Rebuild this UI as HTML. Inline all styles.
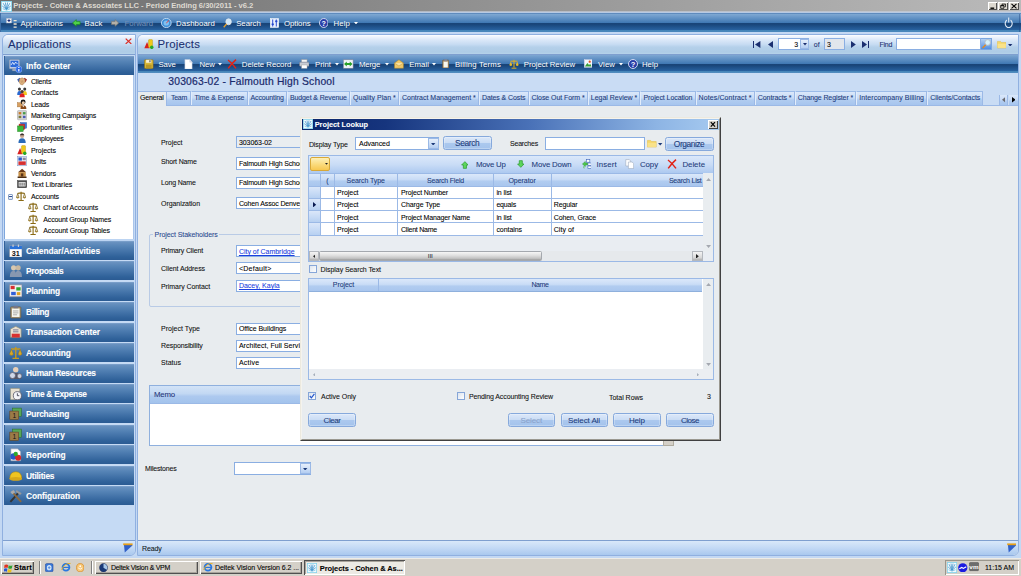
<!DOCTYPE html>
<html><head><meta charset="utf-8"><title>Projects - Cohen &amp; Associates LLC</title><style>
html,body{margin:0;padding:0}
body{width:1021px;height:576px;overflow:hidden;position:relative;background:#bfd5f2;font-family:"Liberation Sans",sans-serif}
#r{position:absolute;left:0;top:0;width:1021px;height:576px;overflow:hidden}
#r div,#r svg,#r span.t{position:absolute}
#r div{overflow:hidden}
span.t{white-space:nowrap;-webkit-text-stroke:0.08px currentColor}
</style></head><body><div id="r">
<div style="left:0.00px;top:0.00px;width:1021.00px;height:576.00px;background:#c3d8f3"></div>
<div style="left:0.00px;top:0.00px;width:1021.00px;height:12.00px;background:linear-gradient(90deg,#6d6d6d 0%,#939393 49%,#bababa 100%)"></div>
<div style="left:0.00px;top:11.00px;width:1021.00px;height:1.00px;background:linear-gradient(90deg,#a8adb6,#c4c9d2)"></div>
<svg style="left:1px;top:1px" width="11" height="11" viewBox="0 0 10 10" preserveAspectRatio="none"><rect x="0" y="0" width="10" height="10" fill="#f2fafd" stroke="#86d2ea" stroke-width="1.6"/><path d="M5 7.6 L2 2 M5 7.6 L4 1.4 M5 7.6 L6 1.4 M5 7.6 L8 2 M5 7.6 L1.2 4.6 M5 7.6 L8.8 4.6" stroke="#3a8ec8" stroke-width="0.7" fill="none"/><path d="M1.6 7 Q5 9.6 8.4 7" stroke="#6ab8e0" stroke-width="0.7" fill="none"/></svg>
<span class="t" style="left:13.30px;top:0px;font-size:7.6px;line-height:11px;color:#dedad2;font-weight:bold;letter-spacing:-0.030px;-webkit-text-stroke:0">Projects - Cohen &amp; Associates LLC - Period Ending 6/30/2011 - v6.2</span>
<div style="left:988.00px;top:2.00px;width:9.00px;height:8.00px;background:#dcd8d0;box-shadow:inset 1px 1px 0 #fff, inset -1px -1px 0 #505050"><svg width="9.0" height="8" viewBox="0 0 9 8" style="position:absolute;left:0;top:0"><path d="M2.4 6.2 H6.2" stroke="#000" stroke-width="1.4"/></svg></div>
<div style="left:998.00px;top:2.00px;width:10.00px;height:8.00px;background:#dcd8d0;box-shadow:inset 1px 1px 0 #fff, inset -1px -1px 0 #505050"><svg width="10.0" height="8" viewBox="0 0 9 8" style="position:absolute;left:0;top:0"><path d="M3.6 2.1 H6.9 M3.6 1.9 V3 M6.9 1.9 V4.8 H6" stroke="#000" stroke-width="0.8" fill="none"/><path d="M2.2 3.5 H5.4 V6.3 H2.2 Z M2.2 3.8 H5.4" stroke="#000" stroke-width="0.8" fill="none"/></svg></div>
<div style="left:1009.00px;top:2.00px;width:10.00px;height:8.00px;background:#dcd8d0;box-shadow:inset 1px 1px 0 #fff, inset -1px -1px 0 #505050"><svg width="10.0" height="8" viewBox="0 0 9 8" style="position:absolute;left:0;top:0"><path d="M2 1.8 L7 6.4 M7 1.8 L2 6.4" stroke="#000" stroke-width="1.1"/></svg></div>
<div style="left:0.00px;top:12.00px;width:1021.00px;height:20.00px;background:linear-gradient(180deg,#b7c9e3 0,#b7c9e3 1px,#5f8bbd 1px,#5f8bbd 2px,#7fa8d2 2px,#78a3d0 3px,#4179b4 10.6px,#1a4579 11.2px,#184478 12px,#27609e 17.6px,#4585b8 18.2px,#4a88bc 20px)"></div>
<div style="left:0.00px;top:13.00px;width:1.00px;height:19.00px;background:#3f6ea8"></div>
<svg style="left:6.00px;top:18.00px" width="11.00" height="10" viewBox="0 0 10 10" preserveAspectRatio="none"><rect x="0.3" y="0.2" width="4.8" height="4.8" fill="#f6f6f6" stroke="#9aa8c4" stroke-width="0.5"/><path d="M1.4 2.6H4M2.7 1.3V3.9" stroke="#1a2a7a" stroke-width="1"/><path d="M6.9 2.6H9.7M6.9 6H9.7M6.9 9.2H9.7" stroke="#f1e8d4" stroke-width="1.3"/></svg>
<span class="t" style="left:20.40px;top:18px;font-size:7.8px;line-height:12px;color:#fff;letter-spacing:0.046px;text-shadow:0.5px 0.5px 0 rgba(20,50,100,0.55);-webkit-text-stroke:0">Applications</span>
<svg style="left:72.00px;top:19.00px" width="8.60" height="8" viewBox="0 0 10 10" preserveAspectRatio="none"><path d="M0.6 5 L5 0.8 V3 H9.4 V7 H5 V9.2 Z" fill="#4fd048" stroke="#1c8a1c" stroke-width="0.8"/></svg>
<span class="t" style="left:84.60px;top:18px;font-size:7.8px;line-height:12px;color:#fff;letter-spacing:0.189px;text-shadow:0.5px 0.5px 0 rgba(20,50,100,0.55);-webkit-text-stroke:0">Back</span>
<svg style="left:111.00px;top:19.00px" width="8.20" height="8" viewBox="0 0 10 10" preserveAspectRatio="none"><path d="M9.4 5 L5 0.8 V3 H0.6 V7 H5 V9.2 Z" fill="#b4b0a8" stroke="#7a7872" stroke-width="0.8"/></svg>
<span class="t" style="left:124.60px;top:18px;font-size:7.8px;line-height:12px;color:#6f8db6;letter-spacing:-0.030px;">Forward</span>
<svg style="left:161.40px;top:17.60px" width="10.60" height="10" viewBox="0 0 10 10" preserveAspectRatio="none"><circle cx="5" cy="5" r="4.6" fill="#3f8fd8" stroke="#cfe3f7" stroke-width="0.8"/><circle cx="5" cy="5" r="2.6" fill="#7fc0f0"/><path d="M5 5 L7.5 2.5" stroke="#e33" stroke-width="0.9"/></svg>
<span class="t" style="left:176.00px;top:18px;font-size:7.8px;line-height:12px;color:#fff;letter-spacing:0.094px;text-shadow:0.5px 0.5px 0 rgba(20,50,100,0.55);-webkit-text-stroke:0">Dashboard</span>
<svg style="left:222.50px;top:17.60px" width="9.00" height="10" viewBox="0 0 10 10" preserveAspectRatio="none"><circle cx="6.2" cy="3.8" r="3" fill="#cfe8fb" stroke="#e8e8e8" stroke-width="0.9"/><path d="M4 6 L0.8 9.2" stroke="#e0a030" stroke-width="1.6"/></svg>
<span class="t" style="left:236.20px;top:18px;font-size:7.8px;line-height:12px;color:#fff;letter-spacing:-0.020px;text-shadow:0.5px 0.5px 0 rgba(20,50,100,0.55);-webkit-text-stroke:0">Search</span>
<svg style="left:270.00px;top:17.60px" width="9.00" height="10" viewBox="0 0 10 10" preserveAspectRatio="none"><rect x="0.3" y="0.5" width="9.4" height="9" fill="#e8f0ff" stroke="#fff" stroke-width="0.5"/><path d="M3 1.5V8.5M7 1.5V8.5" stroke="#2244cc" stroke-width="1"/><rect x="1.8" y="5.5" width="2.4" height="1.6" fill="#2244cc"/><rect x="5.8" y="2.5" width="2.4" height="1.6" fill="#2244cc"/></svg>
<span class="t" style="left:283.90px;top:18px;font-size:7.8px;line-height:12px;color:#fff;letter-spacing:-0.025px;text-shadow:0.5px 0.5px 0 rgba(20,50,100,0.55);-webkit-text-stroke:0">Options</span>
<svg style="left:318.80px;top:17.60px" width="9.50" height="10" viewBox="0 0 10 10" preserveAspectRatio="none"><circle cx="5" cy="5" r="4.5" fill="#2a3fa8" stroke="#dfe6f8" stroke-width="0.9"/><text x="5" y="7.6" font-size="7.5" font-weight="bold" fill="#fff" text-anchor="middle" font-family="Liberation Sans, sans-serif">?</text></svg>
<span class="t" style="left:333.60px;top:18px;font-size:7.8px;line-height:12px;color:#fff;letter-spacing:0.088px;text-shadow:0.5px 0.5px 0 rgba(20,50,100,0.55);-webkit-text-stroke:0">Help</span>
<svg style="left:353.80px;top:21.60px" width="4" height="2.4" viewBox="0 0 4 2.4"><path d="M0 0H4L2 2.4Z" fill="#fff"/></svg>
<svg style="left:1004.00px;top:16.80px" width="9.40" height="11" viewBox="0 0 10 10" preserveAspectRatio="none"><path d="M3 2.8 A3.7 3.7 0 1 0 7 2.8" stroke="#dfe8f4" stroke-width="1.2" fill="none"/><path d="M5 0.4V5" stroke="#dfe8f4" stroke-width="1.2"/></svg>
<div style="left:1019.00px;top:14.00px;width:1.00px;height:18.00px;background:rgba(30,70,130,0.45)"></div>
<div style="left:2.00px;top:34.00px;width:134.00px;height:522.00px;background:#c5daf4;border:1px solid #90b0e0;border-radius:6px 0 6px 0;box-sizing:border-box"></div>
<div style="left:3.00px;top:35.00px;width:132.00px;height:19.00px;background:linear-gradient(180deg,#ffffff 0,#f1f6fd 1.5px,#dbe8f8 5px,#c6dbf2 9.5px,#b5d0ea 12px,#aecce6 17px,#b6d3ea 19px);border-radius:5px 0 0 0"></div>
<div style="left:3.00px;top:54.00px;width:132.00px;height:1.00px;background:#7f9fcf"></div>
<span class="t" style="left:8.00px;top:36px;font-size:11.4px;line-height:16px;color:#1b2f70;letter-spacing:0.132px;">Applications</span>
<svg style="left:125.00px;top:37.70px" width="7.00" height="6.6" viewBox="0 0 10 10" preserveAspectRatio="none"><path d="M1 1L9 9M9 1L1 9" stroke="#dc2a20" stroke-width="1.7"/></svg>
<div style="left:4.00px;top:56.00px;width:130.00px;height:19.00px;background:linear-gradient(180deg,#86a9d2 0,#6a92c0 1px,#5785b7 5px,#4171a7 11px,#2f6199 16px,#2b5b93 19px)"></div>
<div style="left:4.00px;top:56.00px;width:1.00px;height:19.00px;background:#31609a"></div>
<svg style="left:8.70px;top:58.50px" width="13.30" height="14" viewBox="0 0 10 10" preserveAspectRatio="none"><rect x="0.3" y="0.5" width="7.6" height="6.4" rx="0.6" fill="#cfd8e8" stroke="#8a98b0" stroke-width="0.5"/><rect x="1.1" y="1.2" width="6" height="4.6" fill="#2a68d8"/><path d="M1.6 4.2 L2.8 2.4 L3.8 4 L5 2.2 L6.4 3.6" stroke="#fff" stroke-width="0.6" fill="none"/><rect x="2.5" y="7" width="3" height="1.6" fill="#9aa6ba"/><circle cx="7.4" cy="7.4" r="2.4" fill="#2a68e8" stroke="#9fc0f8" stroke-width="0.4"/><path d="M7.4 5.8V6.5M7.4 7.1V8.9" stroke="#fff" stroke-width="0.9"/></svg>
<span class="t" style="left:25.90px;top:60px;font-size:8.4px;line-height:12px;color:#fff;font-weight:bold;letter-spacing:0.054px;">Info Center</span>
<div style="left:4.00px;top:75.00px;width:130.00px;height:164.00px;background:#fff;border-left:1px solid #7ea6dc;border-right:1px solid #a9c4ea;box-sizing:border-box"></div>
<svg style="left:16.80px;top:75.80px" width="10.20" height="10.4" viewBox="0 0 10 10" preserveAspectRatio="none"><path d="M0.2 3.4 L2.6 1.6 L4 4.2 L1.6 6Z" fill="#3a62b8"/><path d="M9.8 3.4 L7.4 1.6 L6 4.2 L8.4 6Z" fill="#a02828"/><path d="M2.4 3 L5 1.8 L7.8 3.2 L8 6 L5.4 8.6 L3.4 8 L2 5.6Z" fill="#dcb080" stroke="#a87840" stroke-width="0.5"/><path d="M3.6 5 L5.2 6.4 M4.6 4.2 L6.2 5.6" stroke="#a87840" stroke-width="0.5"/></svg>
<span class="t" style="left:30.90px;top:76px;font-size:7.0px;line-height:11px;color:#000;letter-spacing:-0.144px;">Clients</span>
<svg style="left:16.80px;top:87.28px" width="10.20" height="10.4" viewBox="0 0 10 10" preserveAspectRatio="none"><circle cx="2.4" cy="2" r="1.5" fill="#3a3a3a"/><circle cx="7.6" cy="2" r="1.5" fill="#3a3a3a"/><path d="M0.2 7.6 Q0.2 3.8 2.4 3.8 Q4.6 3.8 4.6 7.6Z" fill="#2a68d0"/><path d="M5.4 7.6 Q5.4 3.8 7.6 3.8 Q9.8 3.8 9.8 7.6Z" fill="#f0c820"/><circle cx="5" cy="4.4" r="1.6" fill="#4a3a30"/><path d="M2.4 9.8 Q2.4 6 5 6 Q7.6 6 7.6 9.8Z" fill="#e02020"/></svg>
<span class="t" style="left:30.90px;top:87px;font-size:7.0px;line-height:11px;color:#000;letter-spacing:-0.041px;">Contacts</span>
<svg style="left:16.80px;top:98.76px" width="10.20" height="10.4" viewBox="0 0 10 10" preserveAspectRatio="none"><rect x="0.4" y="3.6" width="4.6" height="4" fill="#d8a060" stroke="#a06a30" stroke-width="0.4"/><circle cx="6" cy="3" r="2.4" fill="#1a1a1a"/><circle cx="6.2" cy="3.6" r="1.5" fill="#e8c8a8"/><path d="M3.4 9.6 Q3.4 6 6.2 6 Q9.2 6 9.2 9.6Z" fill="#8a4a18"/><path d="M5.2 6.2 L6.2 8 L7.2 6.2Z" fill="#fff"/></svg>
<span class="t" style="left:30.90px;top:99px;font-size:7.0px;line-height:11px;color:#000;letter-spacing:-0.196px;">Leads</span>
<svg style="left:16.80px;top:110.24px" width="10.20" height="10.4" viewBox="0 0 10 10" preserveAspectRatio="none"><rect x="0.4" y="0.6" width="9.2" height="8.8" rx="1" fill="#d4d4d4" stroke="#9a9a9a" stroke-width="0.5"/><rect x="1.6" y="2" width="2.6" height="2.2" fill="#c87828"/><rect x="5.8" y="2" width="2.6" height="2.2" fill="#4a9a4a"/><rect x="1.6" y="5.6" width="2.6" height="2.2" fill="#7a7a3a"/><rect x="5.8" y="5.6" width="2.6" height="2.2" fill="#4a5ab8"/></svg>
<span class="t" style="left:30.90px;top:110px;font-size:7.0px;line-height:11px;color:#000;letter-spacing:-0.158px;">Marketing Campaigns</span>
<svg style="left:16.80px;top:121.72px" width="10.20" height="10.4" viewBox="0 0 10 10" preserveAspectRatio="none"><rect x="3.6" y="0.6" width="5.8" height="5.4" fill="#3a78d8" stroke="#1a4aa0" stroke-width="0.4"/><rect x="2" y="2" width="5.6" height="5.2" fill="#d83a3a" stroke="#901a1a" stroke-width="0.4"/><rect x="0.5" y="3.8" width="5.6" height="5.4" fill="#3ab83a" stroke="#1a7a1a" stroke-width="0.4"/></svg>
<span class="t" style="left:30.90px;top:122px;font-size:7.0px;line-height:11px;color:#000;letter-spacing:-0.026px;">Opportunities</span>
<svg style="left:16.80px;top:133.20px" width="10.20" height="10.4" viewBox="0 0 10 10" preserveAspectRatio="none"><circle cx="5" cy="2.6" r="2.1" fill="#c8a890"/><path d="M3 1.6 Q5 -0.4 7 1.6 L7 2.2 L3 2.2Z" fill="#3a3030"/><path d="M1.4 9.6 Q1.4 5 5 5 Q8.6 5 8.6 9.6Z" fill="#2a6ab8"/></svg>
<span class="t" style="left:30.90px;top:133px;font-size:7.0px;line-height:11px;color:#000;letter-spacing:-0.216px;">Employees</span>
<svg style="left:16.80px;top:144.68px" width="10.20" height="10.4" viewBox="0 0 10 10" preserveAspectRatio="none"><path d="M0.3 9 L3 3 L5.6 9Z" fill="#d82020"/><rect x="4.4" y="0.6" width="4" height="7.6" rx="0.8" fill="#f0c818" stroke="#b89010" stroke-width="0.4"/><circle cx="7.6" cy="8" r="1.7" fill="#28a828"/></svg>
<span class="t" style="left:30.90px;top:145px;font-size:7.0px;line-height:11px;color:#000;letter-spacing:-0.025px;">Projects</span>
<svg style="left:16.80px;top:156.16px" width="10.20" height="10.4" viewBox="0 0 10 10" preserveAspectRatio="none"><rect x="0.6" y="0.6" width="8.8" height="8.8" fill="#e8eef8" stroke="#7890c0" stroke-width="0.5"/><rect x="1.4" y="1.4" width="3.4" height="3" fill="#2a58c8"/><rect x="1.4" y="5.2" width="7.2" height="3.4" fill="#d83030"/><rect x="5.6" y="1.6" width="3" height="2.4" fill="#889"/></svg>
<span class="t" style="left:30.90px;top:156px;font-size:7.0px;line-height:11px;color:#000;letter-spacing:-0.171px;">Units</span>
<svg style="left:16.80px;top:167.64px" width="10.20" height="10.4" viewBox="0 0 10 10" preserveAspectRatio="none"><path d="M1 4 L5 0.8 L9 4Z" fill="#6a3a1a"/><rect x="1.4" y="4" width="7.2" height="4.4" fill="#c89048"/><rect x="0.6" y="8.2" width="8.8" height="1.4" fill="#4a2a10"/><rect x="3.8" y="5.2" width="2.4" height="3" fill="#5a3418"/></svg>
<span class="t" style="left:30.90px;top:168px;font-size:7.0px;line-height:11px;color:#000;letter-spacing:-0.084px;">Vendors</span>
<svg style="left:16.80px;top:179.12px" width="10.20" height="10.4" viewBox="0 0 10 10" preserveAspectRatio="none"><rect x="0.5" y="1.6" width="9" height="6.8" fill="#444" stroke="#222" stroke-width="0.4"/><rect x="1.6" y="2.8" width="6.8" height="4.4" fill="#e8e8e8"/><path d="M3 3.6V6.4M5 3.6V6.4M7 3.6V6.4" stroke="#444" stroke-width="0.8"/></svg>
<span class="t" style="left:30.90px;top:179px;font-size:7.0px;line-height:11px;color:#000;letter-spacing:-0.017px;">Text Libraries</span>
<div style="left:8.00px;top:193.80px;width:5.00px;height:6.00px;background:linear-gradient(180deg,#fff,#d8e2f0);border:1px solid #8aa2c8;box-sizing:border-box;border-radius:1px"><div style="left:0px;top:1.5px;width:3px;height:1px;background:#2a4a90"></div></div>
<svg style="left:16.00px;top:190.60px" width="10.20" height="10.4" viewBox="0 0 10 10" preserveAspectRatio="none"><path d="M5 0.8V8.8M2.4 9.3H7.6M1.4 2.4 Q5 1.2 8.6 2.4" stroke="#8a6a14" stroke-width="1.1" fill="none"/><path d="M0.4 6.2 L1.7 2.6 L3 6.2Z M7 6.2 L8.3 2.6 L9.6 6.2Z" fill="#f0e6c4" stroke="#6e5410" stroke-width="0.6"/><path d="M0.2 6.2 Q1.7 8.2 3.2 6.2Z M6.8 6.2 Q8.3 8.2 9.8 6.2Z" fill="#a07c18"/></svg>
<span class="t" style="left:31.00px;top:191px;font-size:7.0px;line-height:11px;color:#000;letter-spacing:-0.100px;">Accounts</span>
<svg style="left:28.40px;top:202.08px" width="10.20" height="10.4" viewBox="0 0 10 10" preserveAspectRatio="none"><path d="M5 0.8V8.8M2.4 9.3H7.6M1.4 2.4 Q5 1.2 8.6 2.4" stroke="#8a6a14" stroke-width="1.1" fill="none"/><path d="M0.4 6.2 L1.7 2.6 L3 6.2Z M7 6.2 L8.3 2.6 L9.6 6.2Z" fill="#f0e6c4" stroke="#6e5410" stroke-width="0.6"/><path d="M0.2 6.2 Q1.7 8.2 3.2 6.2Z M6.8 6.2 Q8.3 8.2 9.8 6.2Z" fill="#a07c18"/></svg>
<span class="t" style="left:43.30px;top:202px;font-size:7.0px;line-height:11px;color:#000;letter-spacing:-0.016px;">Chart of Accounts</span>
<svg style="left:28.40px;top:213.56px" width="10.20" height="10.4" viewBox="0 0 10 10" preserveAspectRatio="none"><path d="M5 0.8V8.8M2.4 9.3H7.6M1.4 2.4 Q5 1.2 8.6 2.4" stroke="#8a6a14" stroke-width="1.1" fill="none"/><path d="M0.4 6.2 L1.7 2.6 L3 6.2Z M7 6.2 L8.3 2.6 L9.6 6.2Z" fill="#f0e6c4" stroke="#6e5410" stroke-width="0.6"/><path d="M0.2 6.2 Q1.7 8.2 3.2 6.2Z M6.8 6.2 Q8.3 8.2 9.8 6.2Z" fill="#a07c18"/></svg>
<span class="t" style="left:43.30px;top:214px;font-size:7.0px;line-height:11px;color:#000;letter-spacing:-0.164px;">Account Group Names</span>
<svg style="left:28.40px;top:225.04px" width="10.20" height="10.4" viewBox="0 0 10 10" preserveAspectRatio="none"><path d="M5 0.8V8.8M2.4 9.3H7.6M1.4 2.4 Q5 1.2 8.6 2.4" stroke="#8a6a14" stroke-width="1.1" fill="none"/><path d="M0.4 6.2 L1.7 2.6 L3 6.2Z M7 6.2 L8.3 2.6 L9.6 6.2Z" fill="#f0e6c4" stroke="#6e5410" stroke-width="0.6"/><path d="M0.2 6.2 Q1.7 8.2 3.2 6.2Z M6.8 6.2 Q8.3 8.2 9.8 6.2Z" fill="#a07c18"/></svg>
<span class="t" style="left:43.30px;top:225px;font-size:7.0px;line-height:11px;color:#000;letter-spacing:-0.102px;">Account Group Tables</span>
<div style="left:3.00px;top:239.00px;width:132.00px;height:2.00px;background:#bcd4f2"></div>
<div style="left:4.00px;top:241.00px;width:130.00px;height:19.00px;background:linear-gradient(180deg,#86a9d2 0,#6a92c0 1px,#5785b7 5px,#4171a7 11px,#2f6199 16px,#2b5b93 19px)"></div>
<div style="left:4.00px;top:241.00px;width:1.00px;height:19.00px;background:#31609a"></div>
<svg style="left:8.50px;top:243.50px" width="13.50" height="13.6" viewBox="0 0 10 10" preserveAspectRatio="none"><rect x="0.4" y="1.4" width="9.2" height="8.2" fill="#fff" stroke="#8890a0" stroke-width="0.4"/><rect x="0.4" y="1.4" width="9.2" height="2.4" fill="#2a72d8"/><path d="M3 0.3V2.2M7 0.3V2.2" stroke="#c8ccd4" stroke-width="0.9"/><text x="5" y="9" font-size="5.4" font-weight="bold" text-anchor="middle" fill="#111" font-family="Liberation Sans, sans-serif">31</text></svg>
<span class="t" style="left:26.00px;top:245px;font-size:8.4px;line-height:12px;color:#fff;font-weight:bold;letter-spacing:-0.074px;">Calendar/Activities</span>
<div style="left:4.00px;top:261.00px;width:130.00px;height:19.00px;background:linear-gradient(180deg,#86a9d2 0,#6a92c0 1px,#5785b7 5px,#4171a7 11px,#2f6199 16px,#2b5b93 19px)"></div>
<div style="left:4.00px;top:261.00px;width:1.00px;height:19.00px;background:#31609a"></div>
<svg style="left:8.50px;top:263.97px" width="13.50" height="13.6" viewBox="0 0 10 10" preserveAspectRatio="none"><circle cx="3.4" cy="2.8" r="1.9" fill="#d8c8b0"/><circle cx="6.8" cy="2.8" r="1.9" fill="#c8b8a0"/><path d="M0.6 9.6 Q0.6 5 3.4 5 Q5 5 5 7 Q5 5 6.8 5 Q9.6 5 9.6 9.6Z" fill="#8898b0"/></svg>
<span class="t" style="left:26.00px;top:265px;font-size:8.4px;line-height:12px;color:#fff;font-weight:bold;letter-spacing:-0.356px;">Proposals</span>
<div style="left:4.00px;top:282.00px;width:130.00px;height:19.00px;background:linear-gradient(180deg,#86a9d2 0,#6a92c0 1px,#5785b7 5px,#4171a7 11px,#2f6199 16px,#2b5b93 19px)"></div>
<div style="left:4.00px;top:282.00px;width:1.00px;height:19.00px;background:#31609a"></div>
<svg style="left:8.50px;top:284.44px" width="13.50" height="13.6" viewBox="0 0 10 10" preserveAspectRatio="none"><rect x="0.4" y="0.6" width="9.2" height="8.8" fill="#f0f0f0" stroke="#889" stroke-width="0.5"/><rect x="1.2" y="1.4" width="3" height="2.4" fill="#d83030"/><rect x="5.4" y="2.4" width="3.2" height="2.4" fill="#30a830"/><rect x="1.6" y="5.8" width="3.4" height="2.4" fill="#3060d8"/><rect x="5.8" y="6" width="2.6" height="2.2" fill="#e0a020"/></svg>
<span class="t" style="left:26.00px;top:285px;font-size:8.4px;line-height:12px;color:#fff;font-weight:bold;letter-spacing:-0.172px;">Planning</span>
<div style="left:4.00px;top:302.00px;width:130.00px;height:19.00px;background:linear-gradient(180deg,#86a9d2 0,#6a92c0 1px,#5785b7 5px,#4171a7 11px,#2f6199 16px,#2b5b93 19px)"></div>
<div style="left:4.00px;top:302.00px;width:1.00px;height:19.00px;background:#31609a"></div>
<svg style="left:8.50px;top:304.91px" width="13.50" height="13.6" viewBox="0 0 10 10" preserveAspectRatio="none"><rect x="1.2" y="1.4" width="7.6" height="8.2" rx="0.6" fill="#a89878" stroke="#6a5a40" stroke-width="0.5"/><rect x="2.2" y="2.6" width="5.6" height="6.2" fill="#f8f8f0"/><rect x="3.4" y="0.6" width="3.2" height="1.8" fill="#778"/><path d="M3 4.4H7M3 5.8H7M3 7.2H6" stroke="#888" stroke-width="0.5"/></svg>
<span class="t" style="left:26.00px;top:306px;font-size:8.4px;line-height:12px;color:#fff;font-weight:bold;letter-spacing:-0.371px;">Billing</span>
<div style="left:4.00px;top:323.00px;width:130.00px;height:19.00px;background:linear-gradient(180deg,#86a9d2 0,#6a92c0 1px,#5785b7 5px,#4171a7 11px,#2f6199 16px,#2b5b93 19px)"></div>
<div style="left:4.00px;top:323.00px;width:1.00px;height:19.00px;background:#31609a"></div>
<svg style="left:8.50px;top:325.38px" width="13.50" height="13.6" viewBox="0 0 10 10" preserveAspectRatio="none"><path d="M1 9 V3 L5 1 L9 3 V9Z" fill="#e8e0d0" stroke="#887" stroke-width="0.5"/><rect x="2" y="6.4" width="6" height="2.8" fill="#d83030"/><path d="M3 3.6H7M3 5H7" stroke="#668" stroke-width="0.6"/></svg>
<span class="t" style="left:26.00px;top:326px;font-size:8.4px;line-height:12px;color:#fff;font-weight:bold;letter-spacing:-0.104px;">Transaction Center</span>
<div style="left:4.00px;top:343.00px;width:130.00px;height:19.00px;background:linear-gradient(180deg,#86a9d2 0,#6a92c0 1px,#5785b7 5px,#4171a7 11px,#2f6199 16px,#2b5b93 19px)"></div>
<div style="left:4.00px;top:343.00px;width:1.00px;height:19.00px;background:#31609a"></div>
<svg style="left:8.50px;top:345.85px" width="13.50" height="13.6" viewBox="0 0 10 10" preserveAspectRatio="none"><path d="M5 0.8V8.6M2.6 9.2H7.4M1.6 2.2H8.4" stroke="#c89a20" stroke-width="1" fill="none"/><path d="M0.3 6 Q1.8 7.8 3.3 6 L1.8 2.4Z M6.7 6 Q8.2 7.8 9.7 6 L8.2 2.4Z" fill="#d8a828" stroke="#8a6a10" stroke-width="0.3"/></svg>
<span class="t" style="left:26.00px;top:347px;font-size:8.4px;line-height:12px;color:#fff;font-weight:bold;letter-spacing:-0.136px;">Accounting</span>
<div style="left:4.00px;top:364.00px;width:130.00px;height:19.00px;background:linear-gradient(180deg,#86a9d2 0,#6a92c0 1px,#5785b7 5px,#4171a7 11px,#2f6199 16px,#2b5b93 19px)"></div>
<div style="left:4.00px;top:364.00px;width:1.00px;height:19.00px;background:#31609a"></div>
<svg style="left:8.50px;top:366.32px" width="13.50" height="13.6" viewBox="0 0 10 10" preserveAspectRatio="none"><circle cx="5" cy="2.8" r="2" fill="#e8d0b8"/><path d="M1 9.6 Q1 5 5 5 Q9 5 9 9.6Z" fill="#556"/><circle cx="2.6" cy="7" r="2.2" fill="#d0d8e8" stroke="#556" stroke-width="0.5"/><circle cx="7.8" cy="7.4" r="1.8" fill="#c8d0e0" stroke="#556" stroke-width="0.5"/></svg>
<span class="t" style="left:26.00px;top:367px;font-size:8.4px;line-height:12px;color:#fff;font-weight:bold;letter-spacing:-0.256px;">Human Resources</span>
<div style="left:4.00px;top:384.00px;width:130.00px;height:19.00px;background:linear-gradient(180deg,#86a9d2 0,#6a92c0 1px,#5785b7 5px,#4171a7 11px,#2f6199 16px,#2b5b93 19px)"></div>
<div style="left:4.00px;top:384.00px;width:1.00px;height:19.00px;background:#31609a"></div>
<svg style="left:8.50px;top:386.79px" width="13.50" height="13.6" viewBox="0 0 10 10" preserveAspectRatio="none"><rect x="1" y="1" width="7" height="8.4" rx="0.6" fill="#e8e0d0" stroke="#887" stroke-width="0.5"/><circle cx="6.2" cy="6.4" r="3" fill="#f4f4f8" stroke="#556" stroke-width="0.6"/><path d="M6.2 4.6V6.4H7.6" stroke="#334" stroke-width="0.6" fill="none"/></svg>
<span class="t" style="left:26.00px;top:388px;font-size:8.4px;line-height:12px;color:#fff;font-weight:bold;letter-spacing:-0.275px;">Time &amp; Expense</span>
<div style="left:4.00px;top:404.00px;width:130.00px;height:19.00px;background:linear-gradient(180deg,#86a9d2 0,#6a92c0 1px,#5785b7 5px,#4171a7 11px,#2f6199 16px,#2b5b93 19px)"></div>
<div style="left:4.00px;top:404.00px;width:1.00px;height:19.00px;background:#31609a"></div>
<svg style="left:8.50px;top:407.26px" width="13.50" height="13.6" viewBox="0 0 10 10" preserveAspectRatio="none"><rect x="2.6" y="0.8" width="6.6" height="6" fill="#58a858" stroke="#2a6a2a" stroke-width="0.4"/><rect x="0.6" y="3" width="6.6" height="6.2" fill="#9a7a48" stroke="#5a4020" stroke-width="0.4"/><text x="3.9" y="8.2" font-size="5" text-anchor="middle" fill="#111" font-family="Liberation Sans, sans-serif">1</text></svg>
<span class="t" style="left:26.00px;top:408px;font-size:8.4px;line-height:12px;color:#fff;font-weight:bold;letter-spacing:-0.261px;">Purchasing</span>
<div style="left:4.00px;top:425.00px;width:130.00px;height:19.00px;background:linear-gradient(180deg,#86a9d2 0,#6a92c0 1px,#5785b7 5px,#4171a7 11px,#2f6199 16px,#2b5b93 19px)"></div>
<div style="left:4.00px;top:425.00px;width:1.00px;height:19.00px;background:#31609a"></div>
<svg style="left:8.50px;top:427.73px" width="13.50" height="13.6" viewBox="0 0 10 10" preserveAspectRatio="none"><rect x="2.6" y="0.8" width="6.6" height="6" fill="#58a858" stroke="#2a6a2a" stroke-width="0.4"/><rect x="0.6" y="3" width="6.6" height="6.2" fill="#9a7a48" stroke="#5a4020" stroke-width="0.4"/><text x="3.9" y="8.2" font-size="5" text-anchor="middle" fill="#111" font-family="Liberation Sans, sans-serif">1</text></svg>
<span class="t" style="left:26.00px;top:429px;font-size:8.4px;line-height:12px;color:#fff;font-weight:bold;letter-spacing:0.144px;">Inventory</span>
<div style="left:4.00px;top:445.00px;width:130.00px;height:19.00px;background:linear-gradient(180deg,#86a9d2 0,#6a92c0 1px,#5785b7 5px,#4171a7 11px,#2f6199 16px,#2b5b93 19px)"></div>
<div style="left:4.00px;top:445.00px;width:1.00px;height:19.00px;background:#31609a"></div>
<svg style="left:8.50px;top:448.20px" width="13.50" height="13.6" viewBox="0 0 10 10" preserveAspectRatio="none"><path d="M1.4 0.6H6.4L8.6 2.8V9.4H1.4Z" fill="#fff" stroke="#99a" stroke-width="0.4"/><circle cx="3.4" cy="6.2" r="2.4" fill="#2858c8"/><circle cx="6.8" cy="7.2" r="2.2" fill="#d82828"/><circle cx="5" cy="4.4" r="1.6" fill="#30a830"/></svg>
<span class="t" style="left:26.00px;top:449px;font-size:8.4px;line-height:12px;color:#fff;font-weight:bold;letter-spacing:0.017px;">Reporting</span>
<div style="left:4.00px;top:466.00px;width:130.00px;height:19.00px;background:linear-gradient(180deg,#86a9d2 0,#6a92c0 1px,#5785b7 5px,#4171a7 11px,#2f6199 16px,#2b5b93 19px)"></div>
<div style="left:4.00px;top:466.00px;width:1.00px;height:19.00px;background:#31609a"></div>
<svg style="left:8.50px;top:468.67px" width="13.50" height="13.6" viewBox="0 0 10 10" preserveAspectRatio="none"><path d="M0.6 7 Q0.6 2 5 2 Q9.4 2 9.4 7Z" fill="#f0c420" stroke="#a88410" stroke-width="0.4"/><ellipse cx="5" cy="7.2" rx="4.8" ry="1.4" fill="#d8a818"/></svg>
<span class="t" style="left:26.00px;top:470px;font-size:8.4px;line-height:12px;color:#fff;font-weight:bold;letter-spacing:-0.217px;">Utilities</span>
<div style="left:4.00px;top:486.00px;width:130.00px;height:19.00px;background:linear-gradient(180deg,#86a9d2 0,#6a92c0 1px,#5785b7 5px,#4171a7 11px,#2f6199 16px,#2b5b93 19px)"></div>
<div style="left:4.00px;top:486.00px;width:1.00px;height:19.00px;background:#31609a"></div>
<svg style="left:8.50px;top:489.14px" width="13.50" height="13.6" viewBox="0 0 10 10" preserveAspectRatio="none"><path d="M1 9.4 L7.4 2.4" stroke="#333" stroke-width="1.4"/><path d="M9 9.4 L2.8 2.6" stroke="#8a6a40" stroke-width="1.4"/><path d="M5.6 0.8 L9.4 3.2 L8.2 4.4 L5 2Z" fill="#999"/><path d="M1 2.2 L3.4 0.8 L4.6 2.4 L2.4 3.8Z" fill="#aaa"/></svg>
<span class="t" style="left:26.00px;top:490px;font-size:8.4px;line-height:12px;color:#fff;font-weight:bold;letter-spacing:-0.070px;">Configuration</span>
<div style="left:3.00px;top:540.00px;width:132.00px;height:1.00px;background:#7f9fcf"></div>
<div style="left:3.00px;top:541.00px;width:132.00px;height:14.00px;background:linear-gradient(180deg,#d9e8f9 0%,#c3d9f5 50%,#a9c8ee 100%);border-radius:0 0 5px 0"></div>
<svg style="left:123.20px;top:543.20px" width="9.80" height="10" viewBox="0 0 10 10" preserveAspectRatio="none"><path d="M1 2H9.6V2.6L1.8 9.6Z" fill="#3060c8"/><path d="M0.2 0.4H9.8V2.2H0.2Z" fill="#e8a018"/></svg>
<div style="left:137.00px;top:34.00px;width:882.00px;height:522.00px;background:#e8ecef;border:1px solid #90b0e0;border-radius:6px 0 6px 0;box-sizing:border-box"></div>
<div style="left:138.00px;top:35.00px;width:880.00px;height:19.00px;background:linear-gradient(180deg,#ffffff 0,#f1f6fd 1.5px,#dbe8f8 5px,#c6dbf2 9.5px,#b5d0ea 12px,#aecce6 17px,#b6d3ea 19px);border-radius:5px 0 0 0"></div>
<div style="left:138.00px;top:54.00px;width:880.00px;height:1.00px;background:#7f9fcf"></div>
<svg style="left:144.00px;top:38.80px" width="10.20" height="10.4" viewBox="0 0 10 10" preserveAspectRatio="none"><path d="M0.3 9 L3 3 L5.6 9Z" fill="#d82020"/><rect x="4.4" y="0.6" width="4" height="7.6" rx="0.8" fill="#f0c818" stroke="#b89010" stroke-width="0.4"/><circle cx="7.6" cy="8" r="1.7" fill="#28a828"/></svg>
<span class="t" style="left:157.60px;top:36px;font-size:11.4px;line-height:16px;color:#1b2f70;letter-spacing:0.155px;">Projects</span>
<div style="left:753.00px;top:40.50px;width:1.40px;height:7.00px;background:#1b2f70"></div>
<svg style="left:755.20px;top:40.50px" width="5.40" height="7" viewBox="0 0 10 10" preserveAspectRatio="none"><path d="M10 0 L0 5 L10 10Z" fill="#1b2f70"/></svg>
<svg style="left:767.50px;top:40.50px" width="5.00" height="7" viewBox="0 0 10 10" preserveAspectRatio="none"><path d="M10 0 L0 5 L10 10Z" fill="#1b2f70"/></svg>
<div style="left:778.00px;top:38.00px;width:31.00px;height:12.00px;background:#fff;border:1px solid #8aaee2;box-sizing:border-box"></div>
<div style="left:800.00px;top:39.00px;width:9.00px;height:10.00px;background:linear-gradient(180deg,#e6effb 0%,#cfe0f7 50%,#b3cdf1 100%);border:1px solid #9bb9e6;box-sizing:border-box"></div>
<svg style="left:802.60px;top:43.20px" width="4" height="2.4" viewBox="0 0 4 2.4"><path d="M0 0H4L2 2.4Z" fill="#1b2f70"/></svg>
<span class="t" style="left:794.30px;top:39px;font-size:7.0px;line-height:11px;color:#000;letter-spacing:-0.206px;">3</span>
<span class="t" style="left:813.80px;top:39px;font-size:7.0px;line-height:11px;color:#1b2f70;letter-spacing:0.178px;">of</span>
<div style="left:824.00px;top:38.00px;width:21.00px;height:12.00px;background:#e2e6ec;border:1px solid #8aaee2;box-sizing:border-box"></div>
<span class="t" style="left:827.00px;top:39px;font-size:7.0px;line-height:11px;color:#000;letter-spacing:-0.406px;">3</span>
<svg style="left:851.00px;top:40.50px" width="4.80" height="7" viewBox="0 0 10 10" preserveAspectRatio="none"><path d="M0 0 L10 5 L0 10Z" fill="#1b2f70"/></svg>
<svg style="left:862.00px;top:40.50px" width="5.00" height="7" viewBox="0 0 10 10" preserveAspectRatio="none"><path d="M0 0 L10 5 L0 10Z" fill="#1b2f70"/></svg>
<div style="left:867.60px;top:40.50px;width:1.40px;height:7.00px;background:#1b2f70"></div>
<span class="t" style="left:879.60px;top:39px;font-size:7.0px;line-height:11px;color:#1b2f70;letter-spacing:-0.306px;">Find</span>
<div style="left:896.00px;top:38.00px;width:85.00px;height:12.00px;background:#fff;border:1px solid #8aaee2;box-sizing:border-box"></div>
<div style="left:981.00px;top:38.00px;width:11.00px;height:12.00px;background:linear-gradient(180deg,#b4d0f2 0%,#84b0ea 50%,#4f8ee2 100%);border:1px solid #7aa6e0;border-left:none;box-sizing:border-box"></div>
<svg style="left:981.60px;top:39.20px" width="9.20" height="9.6" viewBox="0 0 10 10" preserveAspectRatio="none"><circle cx="6.2" cy="3.6" r="3" fill="#d4f0fa" stroke="#b0b8c4" stroke-width="0.9"/><path d="M4 6 L0.6 9.4" stroke="#e08a28" stroke-width="1.7"/></svg>
<svg style="left:996.60px;top:39.70px" width="9.40" height="9" viewBox="0 0 10 10" preserveAspectRatio="none"><path d="M0.4 1.6 H3.8 L4.8 2.8 H9.6 V9 H0.4Z" fill="#f6d868" stroke="#e0b840" stroke-width="0.5"/><path d="M0.6 4.2 H9.4 V8.8 H0.6Z" fill="#f9e28a"/></svg>
<svg style="left:1008.20px;top:43.60px" width="4.4" height="2.6" viewBox="0 0 4 2.4"><path d="M0 0H4L2 2.4Z" fill="#1b2f70"/></svg>
<div style="left:138.00px;top:55.00px;width:880.00px;height:18.00px;background:linear-gradient(180deg,#7fa8d2 0,#76a1cf 1px,#4179b4 8.6px,#1a4579 9.2px,#184478 10px,#27609e 15.6px,#4585b8 16.2px,#4a88bc 17.4px,#6f9ccc 18px)"></div>
<svg style="left:144.00px;top:59.00px" width="9.60" height="10" viewBox="0 0 10 10" preserveAspectRatio="none"><rect x="0.5" y="0.8" width="9" height="8.6" rx="0.6" fill="#d8b838" stroke="#8a6a10" stroke-width="0.5"/><rect x="2.2" y="0.8" width="5.4" height="3" fill="#f8f0d0"/><rect x="5.6" y="1.2" width="1.2" height="2" fill="#555"/><rect x="2" y="5.6" width="6" height="3.8" fill="#b89828"/></svg>
<span class="t" style="left:158.50px;top:59px;font-size:7.8px;line-height:12px;color:#fff;letter-spacing:-0.145px;text-shadow:0.5px 0.5px 0 rgba(20,50,100,0.55);-webkit-text-stroke:0">Save</span>
<svg style="left:184.00px;top:58.75px" width="9.00" height="10.5" viewBox="0 0 10 10" preserveAspectRatio="none"><path d="M1 0.4H6.4L9 3V9.6H1Z" fill="#fff" stroke="#b8c4d8" stroke-width="0.5"/><path d="M6.4 0.4V3H9" fill="#dde" stroke="#b8c4d8" stroke-width="0.4"/></svg>
<span class="t" style="left:199.50px;top:59px;font-size:7.8px;line-height:12px;color:#fff;letter-spacing:-0.103px;text-shadow:0.5px 0.5px 0 rgba(20,50,100,0.55);-webkit-text-stroke:0">New</span>
<svg style="left:218.00px;top:63.20px" width="4" height="2.4" viewBox="0 0 4 2.4"><path d="M0 0H4L2 2.4Z" fill="#fff"/></svg>
<svg style="left:227.00px;top:59.00px" width="10.00" height="10" viewBox="0 0 10 10" preserveAspectRatio="none"><path d="M1 1 Q5 4 9 9.4 M9 0.6 Q5 4 1.2 9.4" stroke="#e02418" stroke-width="1.5" fill="none"/></svg>
<span class="t" style="left:241.80px;top:59px;font-size:7.8px;line-height:12px;color:#fff;letter-spacing:-0.026px;text-shadow:0.5px 0.5px 0 rgba(20,50,100,0.55);-webkit-text-stroke:0">Delete Record</span>
<svg style="left:298.70px;top:59.00px" width="10.60" height="10" viewBox="0 0 10 10" preserveAspectRatio="none"><rect x="2.4" y="0.6" width="5.2" height="3" fill="#f4f4f4" stroke="#999" stroke-width="0.4"/><rect x="0.5" y="3.2" width="9" height="4" rx="0.6" fill="#c8ccd4" stroke="#778" stroke-width="0.5"/><rect x="2.4" y="6" width="5.2" height="3.4" fill="#fff" stroke="#999" stroke-width="0.4"/></svg>
<span class="t" style="left:315.00px;top:59px;font-size:7.8px;line-height:12px;color:#fff;letter-spacing:-0.009px;text-shadow:0.5px 0.5px 0 rgba(20,50,100,0.55);-webkit-text-stroke:0">Print</span>
<svg style="left:334.50px;top:63.20px" width="4" height="2.4" viewBox="0 0 4 2.4"><path d="M0 0H4L2 2.4Z" fill="#fff"/></svg>
<svg style="left:343.00px;top:59.00px" width="10.50" height="10" viewBox="0 0 10 10" preserveAspectRatio="none"><rect x="0.4" y="0.8" width="9.2" height="8.4" fill="#f0f4f8" stroke="#889" stroke-width="0.5"/><path d="M1 5 L3.6 2.4V4H6.4V2.4L9 5L6.4 7.6V6H3.6V7.6Z" fill="#28a028"/></svg>
<span class="t" style="left:359.00px;top:59px;font-size:7.8px;line-height:12px;color:#fff;letter-spacing:-0.222px;text-shadow:0.5px 0.5px 0 rgba(20,50,100,0.55);-webkit-text-stroke:0">Merge</span>
<svg style="left:384.80px;top:63.20px" width="4" height="2.4" viewBox="0 0 4 2.4"><path d="M0 0H4L2 2.4Z" fill="#fff"/></svg>
<svg style="left:393.70px;top:59.00px" width="9.90" height="10" viewBox="0 0 10 10" preserveAspectRatio="none"><path d="M0.5 4 L5 0.8 L9.5 4 V9.2 H0.5Z" fill="#f0c868" stroke="#b08828" stroke-width="0.5"/><path d="M0.5 4 L5 7 L9.5 4" fill="#f8e0a0" stroke="#b08828" stroke-width="0.4"/></svg>
<span class="t" style="left:409.30px;top:59px;font-size:7.8px;line-height:12px;color:#fff;letter-spacing:0.040px;text-shadow:0.5px 0.5px 0 rgba(20,50,100,0.55);-webkit-text-stroke:0">Email</span>
<svg style="left:432.30px;top:63.20px" width="4" height="2.4" viewBox="0 0 4 2.4"><path d="M0 0H4L2 2.4Z" fill="#fff"/></svg>
<svg style="left:442.00px;top:58.85px" width="7.40" height="9.5" viewBox="0 0 10 10" preserveAspectRatio="none"><rect x="0.8" y="1.2" width="8.4" height="8.4" rx="0.6" fill="#b89868" stroke="#6a5030" stroke-width="0.6"/><rect x="2.2" y="2.8" width="5.6" height="6" fill="#f8f8f0"/><rect x="3.2" y="0.4" width="3.6" height="2" fill="#889"/></svg>
<span class="t" style="left:455.00px;top:59px;font-size:7.8px;line-height:12px;color:#fff;letter-spacing:0.149px;text-shadow:0.5px 0.5px 0 rgba(20,50,100,0.55);-webkit-text-stroke:0">Billing Terms</span>
<svg style="left:508.70px;top:59.00px" width="10.00" height="10" viewBox="0 0 10 10" preserveAspectRatio="none"><path d="M5 0.8V8.6M2.6 9.2H7.4M1.6 2.2H8.4" stroke="#e0b020" stroke-width="1" fill="none"/><path d="M0.3 6 Q1.8 7.8 3.3 6 L1.8 2.4Z M6.7 6 Q8.2 7.8 9.7 6 L8.2 2.4Z" fill="#e8b828"/></svg>
<span class="t" style="left:523.80px;top:59px;font-size:7.8px;line-height:12px;color:#fff;letter-spacing:-0.057px;text-shadow:0.5px 0.5px 0 rgba(20,50,100,0.55);-webkit-text-stroke:0">Project Review</span>
<svg style="left:584.00px;top:59.10px" width="8.40" height="9" viewBox="0 0 10 10" preserveAspectRatio="none"><rect x="0.4" y="0.8" width="9.2" height="8.4" fill="#f4f8ff" stroke="#dde" stroke-width="0.5"/><path d="M1 8.4 L4 4.4 L6 6.6 L7.4 5.4 L9 8.4Z" fill="#38a038"/><circle cx="6.8" cy="3" r="1.3" fill="#e05020"/></svg>
<span class="t" style="left:598.00px;top:59px;font-size:7.8px;line-height:12px;color:#fff;letter-spacing:0.059px;text-shadow:0.5px 0.5px 0 rgba(20,50,100,0.55);-webkit-text-stroke:0">View</span>
<svg style="left:619.00px;top:63.20px" width="4" height="2.4" viewBox="0 0 4 2.4"><path d="M0 0H4L2 2.4Z" fill="#fff"/></svg>
<svg style="left:628.30px;top:59.00px" width="10.00" height="10" viewBox="0 0 10 10" preserveAspectRatio="none"><circle cx="5" cy="5" r="4.5" fill="#2a3fa8" stroke="#dfe6f8" stroke-width="0.9"/><text x="5" y="7.6" font-size="7.5" font-weight="bold" fill="#fff" text-anchor="middle" font-family="Liberation Sans, sans-serif">?</text></svg>
<span class="t" style="left:642.00px;top:59px;font-size:7.8px;line-height:12px;color:#fff;letter-spacing:-0.012px;text-shadow:0.5px 0.5px 0 rgba(20,50,100,0.55);-webkit-text-stroke:0">Help</span>
<div style="left:138.00px;top:73.00px;width:880.00px;height:18.00px;background:#c9dcf4"></div>
<span class="t" style="left:168.30px;top:74px;font-size:10.3px;line-height:15px;color:#1a2a6c;letter-spacing:0.212px;-webkit-text-stroke:0.22px #1a2a6c">303063-02 - Falmouth High School</span>
<div style="left:138.00px;top:91.00px;width:880.00px;height:15.00px;background:#c9dcf4;border-bottom:1px solid #9bb9e6;box-sizing:border-box"></div>
<div style="left:138.00px;top:91.00px;width:28.00px;height:15.00px;background:#e8ecef;border-top:1px solid #9bb9e6;box-sizing:border-box"></div>
<span class="t" style="left:140.10px;top:92px;font-size:7.0px;line-height:11px;color:#000;letter-spacing:-0.187px;">General</span>
<div style="left:166.00px;top:91.00px;width:25.00px;height:14.00px;background:linear-gradient(180deg,#dbe8fa 0%,#c9dcf6 45%,#b1ccf0 60%,#a6c5ee 100%);border-top:1px solid #9bbbe8;border-right:1px solid #9bb9e6;border-left:1px solid #9bb9e6;box-sizing:border-box"></div>
<span class="t" style="left:170.90px;top:92px;font-size:7.0px;line-height:11px;color:#1e3c7b;letter-spacing:-0.206px;">Team</span>
<div style="left:191.00px;top:91.00px;width:57.00px;height:14.00px;background:linear-gradient(180deg,#dbe8fa 0%,#c9dcf6 45%,#b1ccf0 60%,#a6c5ee 100%);border-top:1px solid #9bbbe8;border-right:1px solid #9bb9e6;border-left:1px solid #e2edfb;box-sizing:border-box"></div>
<span class="t" style="left:194.40px;top:92px;font-size:7.0px;line-height:11px;color:#1e3c7b;letter-spacing:-0.079px;">Time &amp; Expense</span>
<div style="left:248.00px;top:91.00px;width:39.00px;height:14.00px;background:linear-gradient(180deg,#dbe8fa 0%,#c9dcf6 45%,#b1ccf0 60%,#a6c5ee 100%);border-top:1px solid #9bbbe8;border-right:1px solid #9bb9e6;border-left:1px solid #e2edfb;box-sizing:border-box"></div>
<span class="t" style="left:250.60px;top:92px;font-size:7.0px;line-height:11px;color:#1e3c7b;letter-spacing:-0.144px;">Accounting</span>
<div style="left:287.00px;top:91.00px;width:63.00px;height:14.00px;background:linear-gradient(180deg,#dbe8fa 0%,#c9dcf6 45%,#b1ccf0 60%,#a6c5ee 100%);border-top:1px solid #9bbbe8;border-right:1px solid #9bb9e6;border-left:1px solid #e2edfb;box-sizing:border-box"></div>
<span class="t" style="left:290.00px;top:92px;font-size:7.0px;line-height:11px;color:#1e3c7b;letter-spacing:-0.123px;">Budget &amp; Revenue</span>
<div style="left:350.00px;top:91.00px;width:49.00px;height:14.00px;background:linear-gradient(180deg,#dbe8fa 0%,#c9dcf6 45%,#b1ccf0 60%,#a6c5ee 100%);border-top:1px solid #9bbbe8;border-right:1px solid #9bb9e6;border-left:1px solid #e2edfb;box-sizing:border-box"></div>
<span class="t" style="left:353.00px;top:92px;font-size:7.0px;line-height:11px;color:#1e3c7b;letter-spacing:0.027px;">Quality Plan *</span>
<div style="left:399.00px;top:91.00px;width:80.00px;height:14.00px;background:linear-gradient(180deg,#dbe8fa 0%,#c9dcf6 45%,#b1ccf0 60%,#a6c5ee 100%);border-top:1px solid #9bbbe8;border-right:1px solid #9bb9e6;border-left:1px solid #e2edfb;box-sizing:border-box"></div>
<span class="t" style="left:402.00px;top:92px;font-size:7.0px;line-height:11px;color:#1e3c7b;letter-spacing:-0.007px;">Contract Management *</span>
<div style="left:479.00px;top:91.00px;width:50.00px;height:14.00px;background:linear-gradient(180deg,#dbe8fa 0%,#c9dcf6 45%,#b1ccf0 60%,#a6c5ee 100%);border-top:1px solid #9bbbe8;border-right:1px solid #9bb9e6;border-left:1px solid #e2edfb;box-sizing:border-box"></div>
<span class="t" style="left:482.00px;top:92px;font-size:7.0px;line-height:11px;color:#1e3c7b;letter-spacing:-0.104px;">Dates &amp; Costs</span>
<div style="left:529.00px;top:91.00px;width:59.00px;height:14.00px;background:linear-gradient(180deg,#dbe8fa 0%,#c9dcf6 45%,#b1ccf0 60%,#a6c5ee 100%);border-top:1px solid #9bbbe8;border-right:1px solid #9bb9e6;border-left:1px solid #e2edfb;box-sizing:border-box"></div>
<span class="t" style="left:531.60px;top:92px;font-size:7.0px;line-height:11px;color:#1e3c7b;letter-spacing:-0.067px;">Close Out Form *</span>
<div style="left:588.00px;top:91.00px;width:52.00px;height:14.00px;background:linear-gradient(180deg,#dbe8fa 0%,#c9dcf6 45%,#b1ccf0 60%,#a6c5ee 100%);border-top:1px solid #9bbbe8;border-right:1px solid #9bb9e6;border-left:1px solid #e2edfb;box-sizing:border-box"></div>
<span class="t" style="left:590.80px;top:92px;font-size:7.0px;line-height:11px;color:#1e3c7b;letter-spacing:-0.015px;">Legal Review *</span>
<div style="left:640.00px;top:91.00px;width:56.00px;height:14.00px;background:linear-gradient(180deg,#dbe8fa 0%,#c9dcf6 45%,#b1ccf0 60%,#a6c5ee 100%);border-top:1px solid #9bbbe8;border-right:1px solid #9bb9e6;border-left:1px solid #e2edfb;box-sizing:border-box"></div>
<span class="t" style="left:643.50px;top:92px;font-size:7.0px;line-height:11px;color:#1e3c7b;letter-spacing:-0.081px;">Project Location</span>
<div style="left:696.00px;top:91.00px;width:59.00px;height:14.00px;background:linear-gradient(180deg,#dbe8fa 0%,#c9dcf6 45%,#b1ccf0 60%,#a6c5ee 100%);border-top:1px solid #9bbbe8;border-right:1px solid #9bb9e6;border-left:1px solid #e2edfb;box-sizing:border-box"></div>
<span class="t" style="left:698.60px;top:92px;font-size:7.0px;line-height:11px;color:#1e3c7b;letter-spacing:0.103px;">Notes/Contract *</span>
<div style="left:755.00px;top:91.00px;width:40.00px;height:14.00px;background:linear-gradient(180deg,#dbe8fa 0%,#c9dcf6 45%,#b1ccf0 60%,#a6c5ee 100%);border-top:1px solid #9bbbe8;border-right:1px solid #9bb9e6;border-left:1px solid #e2edfb;box-sizing:border-box"></div>
<span class="t" style="left:757.80px;top:92px;font-size:7.0px;line-height:11px;color:#1e3c7b;letter-spacing:-0.084px;">Contracts *</span>
<div style="left:795.00px;top:91.00px;width:61.00px;height:14.00px;background:linear-gradient(180deg,#dbe8fa 0%,#c9dcf6 45%,#b1ccf0 60%,#a6c5ee 100%);border-top:1px solid #9bbbe8;border-right:1px solid #9bb9e6;border-left:1px solid #e2edfb;box-sizing:border-box"></div>
<span class="t" style="left:797.70px;top:92px;font-size:7.0px;line-height:11px;color:#1e3c7b;letter-spacing:-0.106px;">Change Register *</span>
<div style="left:856.00px;top:91.00px;width:71.00px;height:14.00px;background:linear-gradient(180deg,#dbe8fa 0%,#c9dcf6 45%,#b1ccf0 60%,#a6c5ee 100%);border-top:1px solid #9bbbe8;border-right:1px solid #9bb9e6;border-left:1px solid #e2edfb;box-sizing:border-box"></div>
<span class="t" style="left:859.30px;top:92px;font-size:7.0px;line-height:11px;color:#1e3c7b;letter-spacing:0.088px;">Intercompany Billing</span>
<div style="left:927.00px;top:91.00px;width:56.00px;height:14.00px;background:linear-gradient(180deg,#dbe8fa 0%,#c9dcf6 45%,#b1ccf0 60%,#a6c5ee 100%);border-top:1px solid #9bbbe8;border-right:1px solid #9bb9e6;border-left:1px solid #e2edfb;box-sizing:border-box"></div>
<span class="t" style="left:930.30px;top:92px;font-size:7.0px;line-height:11px;color:#1e3c7b;letter-spacing:-0.067px;">Clients/Contacts</span>
<div style="left:999.00px;top:95.00px;width:9.00px;height:10.00px;background:linear-gradient(180deg,#dbe8fa 0%,#c9dcf6 45%,#b1ccf0 60%,#a6c5ee 100%);border-left:1px solid #9bb9e6;border-right:1px solid #9bb9e6;box-sizing:border-box"></div>
<div style="left:1009.00px;top:95.00px;width:9.00px;height:10.00px;background:linear-gradient(180deg,#dbe8fa 0%,#c9dcf6 45%,#b1ccf0 60%,#a6c5ee 100%)"></div>
<svg style="left:1001.80px;top:97.20px" width="3.40" height="5.6" viewBox="0 0 10 10" preserveAspectRatio="none"><path d="M10 0 L0 5 L10 10Z" fill="#6a6a70"/></svg>
<svg style="left:1011.60px;top:97.20px" width="3.60" height="5.6" viewBox="0 0 10 10" preserveAspectRatio="none"><path d="M0 0 L10 5 L0 10Z" fill="#000"/></svg>
<span class="t" style="left:161.00px;top:137px;font-size:7.0px;line-height:11px;color:#101010;letter-spacing:-0.071px;">Project</span>
<div style="left:236.00px;top:136.00px;width:94.00px;height:12.00px;background:#e9edf0;border:1px solid #8aaee2;box-sizing:border-box"></div>
<span class="t" style="left:238.90px;top:137px;font-size:7.0px;line-height:11px;color:#000;letter-spacing:-0.054px;">303063-02</span>
<span class="t" style="left:161.00px;top:156px;font-size:7.0px;line-height:11px;color:#101010;letter-spacing:-0.166px;">Short Name</span>
<div style="left:236.00px;top:157.00px;width:94.00px;height:13.00px;background:#fff;border:1px solid #8aaee2;box-sizing:border-box"></div>
<span class="t" style="left:238.90px;top:158px;font-size:7.0px;line-height:11px;color:#000;letter-spacing:-0.151px;">Falmouth High School</span>
<span class="t" style="left:161.00px;top:177px;font-size:7.0px;line-height:11px;color:#101010;letter-spacing:-0.167px;">Long Name</span>
<div style="left:236.00px;top:177.00px;width:94.00px;height:12.00px;background:#fff;border:1px solid #8aaee2;box-sizing:border-box"></div>
<span class="t" style="left:238.90px;top:177px;font-size:7.0px;line-height:11px;color:#000;letter-spacing:-0.151px;">Falmouth High School</span>
<span class="t" style="left:161.00px;top:198px;font-size:7.0px;line-height:11px;color:#101010;letter-spacing:-0.059px;">Organization</span>
<div style="left:236.00px;top:197.00px;width:94.00px;height:12.00px;background:#fff;border:1px solid #8aaee2;box-sizing:border-box"></div>
<span class="t" style="left:238.90px;top:198px;font-size:7.0px;line-height:11px;color:#000;letter-spacing:-0.138px;">Cohen Assoc Denver</span>
<div style="left:149.00px;top:234.00px;width:523.00px;height:73.00px;border:1px solid #b9cbe6;box-sizing:border-box;border-radius:2px"></div>
<div style="left:153.00px;top:230.00px;width:66.00px;height:9.00px;background:#e8ecef"></div>
<span class="t" style="left:154.60px;top:229px;font-size:7.0px;line-height:11px;color:#2a4a90;letter-spacing:-0.075px;">Project Stakeholders</span>
<span class="t" style="left:161.00px;top:245px;font-size:7.0px;line-height:11px;color:#101010;letter-spacing:-0.140px;">Primary Client</span>
<div style="left:236.00px;top:245.00px;width:94.00px;height:12.00px;background:#fff;border:1px solid #8aaee2;box-sizing:border-box"></div>
<span class="t" style="left:238.90px;top:246px;font-size:7.0px;line-height:11px;color:#1a40e0;letter-spacing:-0.019px;text-decoration:underline;text-decoration-thickness:0.6px;text-underline-offset:0.8px">City of Cambridge</span>
<span class="t" style="left:161.00px;top:263px;font-size:7.0px;line-height:11px;color:#101010;letter-spacing:-0.081px;">Client Address</span>
<div style="left:236.00px;top:262.00px;width:94.00px;height:12.00px;background:#fff;border:1px solid #8aaee2;box-sizing:border-box"></div>
<span class="t" style="left:238.90px;top:263px;font-size:7.0px;line-height:11px;color:#000;letter-spacing:0.260px;">&lt;Default&gt;</span>
<span class="t" style="left:161.00px;top:281px;font-size:7.0px;line-height:11px;color:#101010;letter-spacing:-0.079px;">Primary Contact</span>
<div style="left:236.00px;top:280.00px;width:94.00px;height:12.00px;background:#fff;border:1px solid #8aaee2;box-sizing:border-box"></div>
<span class="t" style="left:238.90px;top:280px;font-size:7.0px;line-height:11px;color:#1a40e0;text-decoration:underline;text-decoration-thickness:0.6px;text-underline-offset:0.8px">Dacey, Kayla</span>
<span class="t" style="left:161.00px;top:323px;font-size:7.0px;line-height:11px;color:#101010;letter-spacing:0.018px;">Project Type</span>
<div style="left:236.00px;top:323.00px;width:94.00px;height:12.00px;background:#fff;border:1px solid #8aaee2;box-sizing:border-box"></div>
<span class="t" style="left:238.90px;top:323px;font-size:7.0px;line-height:11px;color:#000;letter-spacing:-0.070px;">Office Buildings</span>
<span class="t" style="left:161.00px;top:340px;font-size:7.0px;line-height:11px;color:#101010;letter-spacing:-0.106px;">Responsibility</span>
<div style="left:236.00px;top:340.00px;width:94.00px;height:12.00px;background:#fff;border:1px solid #8aaee2;box-sizing:border-box"></div>
<span class="t" style="left:238.90px;top:340px;font-size:7.0px;line-height:11px;color:#000;letter-spacing:0.038px;">Architect, Full Service</span>
<span class="t" style="left:161.00px;top:357px;font-size:7.0px;line-height:11px;color:#101010;letter-spacing:0.023px;">Status</span>
<div style="left:236.00px;top:357.00px;width:94.00px;height:12.00px;background:#fff;border:1px solid #8aaee2;box-sizing:border-box"></div>
<span class="t" style="left:238.90px;top:357px;font-size:7.0px;line-height:11px;color:#000;letter-spacing:0.223px;">Active</span>
<div style="left:149.00px;top:385.00px;width:525.00px;height:61.00px;background:#fff;border:1px solid #8fb0de;box-sizing:border-box"></div>
<div style="left:150.00px;top:386.00px;width:523.00px;height:18.00px;background:linear-gradient(180deg,#d3e3f7 0%,#c2d8f3 45%,#adc9ef 60%,#a3c3ec 100%);border-bottom:1px solid #9bb9e6;box-sizing:border-box"></div>
<span class="t" style="left:154.00px;top:389px;font-size:7.8px;line-height:12px;color:#24357a;letter-spacing:-0.168px;">Memo</span>
<div style="left:663.00px;top:440.00px;width:11.00px;height:6.00px;background:#d4d0c8;border:1px solid #b0aca0;box-sizing:border-box"></div>
<span class="t" style="left:145.00px;top:463px;font-size:7.0px;line-height:11px;color:#101010;letter-spacing:-0.197px;">Milestones</span>
<div style="left:234.00px;top:462.00px;width:77.00px;height:13.00px;background:#fff;border:1px solid #8aaee2;box-sizing:border-box"></div>
<div style="left:300.00px;top:463.00px;width:11.00px;height:11.00px;background:linear-gradient(180deg,#e6effb 0%,#cfe0f7 50%,#b3cdf1 100%);border:1px solid #9bb9e6;box-sizing:border-box"></div>
<svg style="left:303.30px;top:467.50px" width="4.4" height="2.6" viewBox="0 0 4 2.4"><path d="M0 0H4L2 2.4Z" fill="#1e3c7b"/></svg>
<div style="left:138.00px;top:540.00px;width:880.00px;height:1.00px;background:#7f9fcf"></div>
<div style="left:138.00px;top:541.00px;width:880.00px;height:14.00px;background:linear-gradient(180deg,#d9e8f9 0%,#c3d9f5 50%,#a9c8ee 100%);border-radius:0 0 5px 0"></div>
<span class="t" style="left:142.00px;top:543px;font-size:7.0px;line-height:11px;color:#101820;letter-spacing:-0.107px;">Ready</span>
<svg style="left:1007.00px;top:543.20px" width="9.40" height="10" viewBox="0 0 10 10" preserveAspectRatio="none"><path d="M1 2H9.6V2.6L1.8 9.6Z" fill="#3060c8"/><path d="M0.2 0.4H9.8V2.2H0.2Z" fill="#e8a018"/></svg>
<div style="left:300.00px;top:117.00px;width:421.00px;height:324.00px;background:#e8ecef;border-top:1px solid #ece9df;border-left:1px solid #ece9df;border-right:1px solid #404040;border-bottom:1px solid #404040;box-sizing:border-box"></div>
<div style="left:301.00px;top:118.00px;width:419.00px;height:322.00px;border-top:1px solid #f4f3ee;border-left:1px solid #f4f3ee;border-right:1px solid #9a9890;border-bottom:1px solid #9a9890;box-sizing:border-box"></div>
<div style="left:302.00px;top:119.00px;width:417.00px;height:11.00px;background:linear-gradient(90deg,#0a246a 0%,#16357e 20%,#4a72b8 55%,#8db4e4 85%,#a6caf0 100%)"></div>
<svg style="left:303px;top:119px" width="10" height="10" viewBox="0 0 10 10" preserveAspectRatio="none"><rect x="0" y="0" width="10" height="10" fill="#f2fafd" stroke="#86d2ea" stroke-width="1.6"/><path d="M5 7.6 L2 2 M5 7.6 L4 1.4 M5 7.6 L6 1.4 M5 7.6 L8 2 M5 7.6 L1.2 4.6 M5 7.6 L8.8 4.6" stroke="#3a8ec8" stroke-width="0.7" fill="none"/><path d="M1.6 7 Q5 9.6 8.4 7" stroke="#6ab8e0" stroke-width="0.7" fill="none"/></svg>
<span class="t" style="left:314.70px;top:119px;font-size:7.4px;line-height:11px;color:#fff;font-weight:bold;letter-spacing:-0.028px;">Project Lookup</span>
<div style="left:708.00px;top:120.00px;width:10.00px;height:9.00px;background:#d4d0c8;box-shadow:inset 1px 1px 0 #fff, inset -1px -1px 0 #404040"><svg width="10" height="9" viewBox="0 0 10 9" style="position:absolute;left:0;top:0"><path d="M2.8 2.2 L7 6.6 M7 2.2 L2.8 6.6" stroke="#000" stroke-width="1.2"/></svg></div>
<span class="t" style="left:308.90px;top:139px;font-size:7.0px;line-height:11px;color:#101010;letter-spacing:-0.079px;">Display Type</span>
<div style="left:355.00px;top:137.00px;width:84.00px;height:13.00px;background:#fff;border:1px solid #8aaee2;box-sizing:border-box"></div>
<span class="t" style="left:359.10px;top:138px;font-size:7.0px;line-height:11px;color:#000;letter-spacing:-0.055px;">Advanced</span>
<div style="left:428.00px;top:138.00px;width:11.00px;height:11.00px;background:linear-gradient(180deg,#e6effb 0%,#cfe0f7 50%,#b3cdf1 100%);border:1px solid #9bb9e6;box-sizing:border-box"></div>
<svg style="left:431.40px;top:142.50px" width="4.4" height="2.6" viewBox="0 0 4 2.4"><path d="M0 0H4L2 2.4Z" fill="#1e3c7b"/></svg>
<div style="left:443.00px;top:136.00px;width:49.00px;height:14.00px;background:linear-gradient(180deg,#dce8f9 0%,#cbddf5 46%,#abc8ee 54%,#a4c3ec 100%);border:1px solid #86a9dc;box-sizing:border-box;border-radius:2.5px;box-shadow:inset 0 0 0 1px rgba(255,255,255,0.25)"></div>
<span class="t" style="left:455.00px;top:137px;font-size:8.4px;line-height:12px;color:#1e3c7b;letter-spacing:-0.391px;">Search</span>
<span class="t" style="left:510.00px;top:138px;font-size:7.0px;line-height:11px;color:#101010;letter-spacing:-0.197px;">Searches</span>
<div style="left:545.00px;top:137.00px;width:100.00px;height:13.00px;background:#fff;border:1px solid #8aaee2;box-sizing:border-box"></div>
<svg style="left:647.00px;top:139.10px" width="9.60" height="9" viewBox="0 0 10 10" preserveAspectRatio="none"><path d="M0.4 1.6 H3.8 L4.8 2.8 H9.6 V9 H0.4Z" fill="#f6d868" stroke="#e0b840" stroke-width="0.5"/><path d="M0.6 4.2 H9.4 V8.8 H0.6Z" fill="#f9e28a"/></svg>
<svg style="left:658.40px;top:143.10px" width="4.4" height="2.6" viewBox="0 0 4 2.4"><path d="M0 0H4L2 2.4Z" fill="#1e3c7b"/></svg>
<div style="left:665.00px;top:137.00px;width:49.00px;height:14.00px;background:linear-gradient(180deg,#dce8f9 0%,#cbddf5 46%,#abc8ee 54%,#a4c3ec 100%);border:1px solid #86a9dc;box-sizing:border-box;border-radius:2.5px;box-shadow:inset 0 0 0 1px rgba(255,255,255,0.25)"></div>
<span class="t" style="left:673.80px;top:138px;font-size:8.4px;line-height:12px;color:#1e3c7b;letter-spacing:-0.436px;">Organize</span>
<div style="left:308.00px;top:155.00px;width:406.00px;height:107.00px;background:#e9edf2;border:1px solid #9bb9e6;box-sizing:border-box"></div>
<div style="left:309.00px;top:156.00px;width:404.00px;height:17.00px;background:linear-gradient(180deg,#dbe8fa 0%,#c9dcf6 50%,#adc9f0 100%)"></div>
<div style="left:310.00px;top:157.00px;width:20.00px;height:14.00px;background:linear-gradient(180deg,#fdf0b8 0%,#fbdc80 50%,#f8c850 100%);border:1px solid #d8a838;box-sizing:border-box;border-radius:2px"></div>
<svg style="left:324.50px;top:163.30px" width="3" height="1.8" viewBox="0 0 4 2.4"><path d="M0 0H4L2 2.4Z" fill="#202020"/></svg>
<svg style="left:460.60px;top:160.60px" width="7.80" height="8" viewBox="0 0 10 10" preserveAspectRatio="none"><path d="M5 0.8 L9.2 5 H7 V9.2 H3 V5 H0.8Z" fill="#5cd65c" stroke="#2a9a2a" stroke-width="0.9"/></svg>
<span class="t" style="left:476.00px;top:159px;font-size:7.8px;line-height:12px;color:#1e3c7b;letter-spacing:-0.243px;">Move Up</span>
<svg style="left:516.80px;top:160.00px" width="7.60" height="8" viewBox="0 0 10 10" preserveAspectRatio="none"><path d="M5 9.2 L9.2 5 H7 V0.8 H3 V5 H0.8Z" fill="#5cd65c" stroke="#2a9a2a" stroke-width="0.9"/></svg>
<span class="t" style="left:531.60px;top:159px;font-size:7.8px;line-height:12px;color:#1e3c7b;letter-spacing:-0.141px;">Move Down</span>
<svg style="left:581.70px;top:159.20px" width="9.80" height="10" viewBox="0 0 10 10" preserveAspectRatio="none"><rect x="4.4" y="0.6" width="3.6" height="2.6" fill="#fff" stroke="#3a62b8" stroke-width="0.6"/><rect x="6" y="4" width="3.4" height="2.4" fill="#fff" stroke="#3a62b8" stroke-width="0.6"/><rect x="6" y="7" width="3.4" height="2.4" fill="#fff" stroke="#3a62b8" stroke-width="0.6"/><path d="M0.4 5 L3.4 2.4 V4 H5.6 V6 H3.4 V7.6Z" fill="#4cc84c" stroke="#2a8a2a" stroke-width="0.4"/><path d="M2.2 9.4 Q1 7.6 2.6 6.8" stroke="#4cc84c" stroke-width="0.9" fill="none"/></svg>
<span class="t" style="left:596.60px;top:159px;font-size:7.8px;line-height:12px;color:#1e3c7b;letter-spacing:0.100px;">Insert</span>
<svg style="left:625.00px;top:159.40px" width="9.40" height="10" viewBox="0 0 10 10" preserveAspectRatio="none"><path d="M0.8 0.6H4.6L6 2V7H0.8Z" fill="#fff" stroke="#9aa6bc" stroke-width="0.6"/><path d="M3.6 3H7.6L9.2 4.6V9.6H3.6Z" fill="#fff" stroke="#9aa6bc" stroke-width="0.6"/></svg>
<span class="t" style="left:640.00px;top:159px;font-size:7.8px;line-height:12px;color:#1e3c7b;letter-spacing:-0.051px;">Copy</span>
<svg style="left:667.00px;top:159.40px" width="10.00" height="10" viewBox="0 0 10 10" preserveAspectRatio="none"><path d="M1 1 Q5 4 9 9.4 M9 0.6 Q5 4 1.2 9.4" stroke="#e02418" stroke-width="1.5" fill="none"/></svg>
<span class="t" style="left:682.40px;top:159px;font-size:7.8px;line-height:12px;color:#1e3c7b;letter-spacing:0.009px;">Delete</span>
<div style="left:309.00px;top:173.00px;width:394.00px;height:14.00px;background:linear-gradient(180deg,#dbe8fa 0%,#c9dcf6 45%,#b1ccf0 60%,#a9c6ee 100%);border-top:1px solid #9bb9e6;border-bottom:1px solid #9bb9e6;box-sizing:border-box"></div>
<div style="left:320.00px;top:187.00px;width:383.00px;height:48.00px;background:#fff"></div>
<div style="left:309.00px;top:187.00px;width:11.00px;height:11.00px;background:linear-gradient(180deg,#dbe7f9 0%,#c9dcf6 50%,#b7d0f1 100%)"></div>
<div style="left:309.00px;top:199.00px;width:11.00px;height:11.00px;background:linear-gradient(180deg,#dbe7f9 0%,#c9dcf6 50%,#b7d0f1 100%)"></div>
<div style="left:309.00px;top:211.00px;width:11.00px;height:11.00px;background:linear-gradient(180deg,#dbe7f9 0%,#c9dcf6 50%,#b7d0f1 100%)"></div>
<div style="left:309.00px;top:223.00px;width:11.00px;height:12.00px;background:linear-gradient(180deg,#dbe7f9 0%,#c9dcf6 50%,#b7d0f1 100%)"></div>
<div style="left:309.00px;top:198.00px;width:394.00px;height:1.00px;background:#9bb9e6"></div>
<div style="left:309.00px;top:210.00px;width:394.00px;height:1.00px;background:#9bb9e6"></div>
<div style="left:309.00px;top:222.00px;width:394.00px;height:1.00px;background:#9bb9e6"></div>
<div style="left:309.00px;top:235.00px;width:394.00px;height:1.00px;background:#9bb9e6"></div>
<div style="left:320.00px;top:174.00px;width:1.00px;height:61.00px;background:#9bb9e6"></div>
<div style="left:334.00px;top:174.00px;width:1.00px;height:61.00px;background:#9bb9e6"></div>
<div style="left:397.00px;top:174.00px;width:1.00px;height:61.00px;background:#9bb9e6"></div>
<div style="left:493.00px;top:174.00px;width:1.00px;height:61.00px;background:#9bb9e6"></div>
<div style="left:551.00px;top:174.00px;width:1.00px;height:61.00px;background:#9bb9e6"></div>
<span class="t" style="left:326.30px;top:175px;font-size:7.0px;line-height:11px;color:#1e3c7b;letter-spacing:-0.044px;">(</span>
<span class="t" style="left:346.60px;top:175px;font-size:7.0px;line-height:11px;color:#1e3c7b;letter-spacing:-0.090px;">Search Type</span>
<span class="t" style="left:427.00px;top:175px;font-size:7.0px;line-height:11px;color:#1e3c7b;letter-spacing:-0.191px;">Search Field</span>
<span class="t" style="left:508.40px;top:175px;font-size:7.0px;line-height:11px;color:#1e3c7b;letter-spacing:-0.041px;">Operator</span>
<span class="t" style="left:668.90px;top:175px;font-size:7.0px;line-height:11px;color:#1e3c7b;letter-spacing:-0.212px;">Search List</span>
<svg style="left:313.40px;top:202.10px" width="3.20" height="5.4" viewBox="0 0 10 10" preserveAspectRatio="none"><path d="M0 0 L10 5 L0 10Z" fill="#0a1a50"/></svg>
<span class="t" style="left:337.00px;top:187px;font-size:7.0px;line-height:11px;color:#000;letter-spacing:-0.042px;">Project</span>
<span class="t" style="left:401.00px;top:187px;font-size:7.0px;line-height:11px;color:#000;letter-spacing:-0.117px;">Project Number</span>
<span class="t" style="left:496.40px;top:187px;font-size:7.0px;line-height:11px;color:#000;letter-spacing:-0.093px;">in list</span>
<span class="t" style="left:337.00px;top:199px;font-size:7.0px;line-height:11px;color:#000;letter-spacing:-0.042px;">Project</span>
<span class="t" style="left:401.00px;top:199px;font-size:7.0px;line-height:11px;color:#000;letter-spacing:-0.087px;">Charge Type</span>
<span class="t" style="left:496.40px;top:199px;font-size:7.0px;line-height:11px;color:#000;letter-spacing:-0.173px;">equals</span>
<span class="t" style="left:553.70px;top:199px;font-size:7.0px;line-height:11px;color:#000;letter-spacing:-0.117px;">Regular</span>
<span class="t" style="left:337.00px;top:212px;font-size:7.0px;line-height:11px;color:#000;letter-spacing:-0.042px;">Project</span>
<span class="t" style="left:401.00px;top:212px;font-size:7.0px;line-height:11px;color:#000;letter-spacing:-0.149px;">Project Manager Name</span>
<span class="t" style="left:496.40px;top:212px;font-size:7.0px;line-height:11px;color:#000;letter-spacing:-0.093px;">in list</span>
<span class="t" style="left:553.70px;top:212px;font-size:7.0px;line-height:11px;color:#000;letter-spacing:-0.108px;">Cohen, Grace</span>
<span class="t" style="left:337.00px;top:224px;font-size:7.0px;line-height:11px;color:#000;letter-spacing:-0.042px;">Project</span>
<span class="t" style="left:401.00px;top:224px;font-size:7.0px;line-height:11px;color:#000;letter-spacing:-0.229px;">Client Name</span>
<span class="t" style="left:496.40px;top:224px;font-size:7.0px;line-height:11px;color:#000;letter-spacing:-0.060px;">contains</span>
<span class="t" style="left:553.70px;top:224px;font-size:7.0px;line-height:11px;color:#000;letter-spacing:0.065px;">City of</span>
<div style="left:703.00px;top:174.00px;width:10.00px;height:78.00px;background:#e9edf0"></div>
<svg style="left:705.8px;top:178px" width="5.2" height="3" viewBox="0 0 4 2.4"><path d="M0 2.4H4L2 0Z" fill="#a4a8b0"/></svg>
<svg style="left:705.80px;top:244.50px" width="5.2" height="3" viewBox="0 0 4 2.4"><path d="M0 0H4L2 2.4Z" fill="#a4a8b0"/></svg>
<div style="left:309.00px;top:251.00px;width:394.00px;height:10.00px;background:#e6e9ec"></div>
<div style="left:309.00px;top:251.00px;width:10.00px;height:10.00px;background:linear-gradient(180deg,#f4f4f4,#d8d8d8 70%,#b0b0b0);border:1px solid #b4b8be;box-sizing:border-box"></div>
<svg style="left:312.60px;top:253.90px" width="2.80" height="4.6" viewBox="0 0 10 10" preserveAspectRatio="none"><path d="M10 0 L0 5 L10 10Z" fill="#202020"/></svg>
<div style="left:319.00px;top:251.00px;width:223.00px;height:10.00px;background:linear-gradient(180deg,#f6f6f6 0%,#dedede 45%,#c2c2c2 80%,#9c9c9c 100%);border:1px solid #a4a8ae;box-sizing:border-box;border-radius:1.5px"></div>
<span class="t" style="left:428.00px;top:253px;font-size:4.6px;line-height:7px;color:#404850;font-weight:bold;letter-spacing:0.385px;">III</span>
<div style="left:692.00px;top:251.00px;width:11.00px;height:10.00px;background:linear-gradient(180deg,#f4f4f4,#d8d8d8 70%,#b0b0b0);border:1px solid #b4b8be;box-sizing:border-box"></div>
<svg style="left:696.40px;top:253.90px" width="2.80" height="4.6" viewBox="0 0 10 10" preserveAspectRatio="none"><path d="M0 0 L10 5 L0 10Z" fill="#202020"/></svg>
<div style="left:309.00px;top:265.00px;width:8.00px;height:8.00px;background:linear-gradient(135deg,#dce4ef,#fff);border:1px solid #86a6d8;box-sizing:border-box"></div>
<span class="t" style="left:320.60px;top:264px;font-size:7.0px;line-height:11px;color:#101010;letter-spacing:-0.070px;">Display Search Text</span>
<div style="left:308.00px;top:278.00px;width:406.00px;height:102.00px;background:#fff;border:1px solid #9bb9e6;box-sizing:border-box"></div>
<div style="left:309.00px;top:279.00px;width:393.00px;height:13.00px;background:linear-gradient(180deg,#dbe8fa 0%,#c9dcf6 45%,#b1ccf0 60%,#a9c6ee 100%);border-bottom:1px solid #8fb0dc;box-sizing:border-box"></div>
<div style="left:378.00px;top:279.00px;width:1.00px;height:12.00px;background:#9bb9e6"></div>
<span class="t" style="left:332.80px;top:279px;font-size:7.0px;line-height:11px;color:#1e3c7b;letter-spacing:-0.057px;">Project</span>
<span class="t" style="left:531.40px;top:279px;font-size:7.0px;line-height:11px;color:#1e3c7b;letter-spacing:-0.372px;">Name</span>
<div style="left:703.00px;top:279.00px;width:10.00px;height:90.00px;background:#e9edf0"></div>
<svg style="left:705.8px;top:283px" width="5.2" height="3" viewBox="0 0 4 2.4"><path d="M0 2.4H4L2 0Z" fill="#a4a8b0"/></svg>
<svg style="left:705.80px;top:362.50px" width="5.2" height="3" viewBox="0 0 4 2.4"><path d="M0 0H4L2 2.4Z" fill="#a4a8b0"/></svg>
<div style="left:309.00px;top:369.00px;width:404.00px;height:10.00px;background:#ebeef2"></div>
<svg style="left:312.60px;top:372.60px" width="2.00" height="3.6" viewBox="0 0 10 10" preserveAspectRatio="none"><path d="M10 0 L0 5 L10 10Z" fill="#a8b0bc"/></svg>
<svg style="left:696.60px;top:372.60px" width="2.00" height="3.6" viewBox="0 0 10 10" preserveAspectRatio="none"><path d="M0 0 L10 5 L0 10Z" fill="#a8b0bc"/></svg>
<div style="left:308.00px;top:392.00px;width:8.00px;height:8.00px;background:linear-gradient(135deg,#dce4ef,#fff);border:1px solid #86a6d8;box-sizing:border-box"><svg width="8" height="8" viewBox="0 0 8 8" style="position:absolute;left:-1px;top:-1px"><path d="M1.8 4 L3.4 5.8 L6.4 1.8" stroke="#2456cc" stroke-width="1.2" fill="none"/></svg></div>
<span class="t" style="left:321.00px;top:391px;font-size:7.0px;line-height:11px;color:#101010;letter-spacing:-0.037px;">Active Only</span>
<div style="left:457.00px;top:392.00px;width:8.00px;height:8.00px;background:linear-gradient(135deg,#dce4ef,#fff);border:1px solid #86a6d8;box-sizing:border-box"></div>
<span class="t" style="left:468.90px;top:391px;font-size:7.0px;line-height:11px;color:#101010;letter-spacing:-0.107px;">Pending Accounting Review</span>
<span class="t" style="left:609.00px;top:392px;font-size:7.0px;line-height:11px;color:#101010;letter-spacing:-0.023px;">Total Rows</span>
<span class="t" style="left:707.00px;top:391px;font-size:7.0px;line-height:11px;color:#101010;letter-spacing:0.094px;">3</span>
<div style="left:308.00px;top:413.00px;width:48.00px;height:14.00px;background:linear-gradient(180deg,#dce8f9 0%,#cbddf5 46%,#abc8ee 54%,#a4c3ec 100%);border:1px solid #86a9dc;box-sizing:border-box;border-radius:2.5px;box-shadow:inset 0 0 0 1px rgba(255,255,255,0.25)"></div>
<span class="t" style="left:323.60px;top:415px;font-size:8.0px;line-height:12px;color:#1e3c7b;letter-spacing:-0.465px;">Clear</span>
<div style="left:508.00px;top:413.00px;width:47.00px;height:14.00px;background:linear-gradient(180deg,#dce8f9 0%,#cbddf5 46%,#abc8ee 54%,#a4c3ec 100%);border:1px solid #86a9dc;box-sizing:border-box;border-radius:2.5px;box-shadow:inset 0 0 0 1px rgba(255,255,255,0.25)"></div>
<span class="t" style="left:520.60px;top:415px;font-size:8.0px;line-height:12px;color:#8aa3cc;letter-spacing:-0.139px;">Select</span>
<div style="left:561.00px;top:413.00px;width:47.00px;height:14.00px;background:linear-gradient(180deg,#dce8f9 0%,#cbddf5 46%,#abc8ee 54%,#a4c3ec 100%);border:1px solid #86a9dc;box-sizing:border-box;border-radius:2.5px;box-shadow:inset 0 0 0 1px rgba(255,255,255,0.25)"></div>
<span class="t" style="left:568.00px;top:415px;font-size:8.0px;line-height:12px;color:#1e3c7b;letter-spacing:-0.091px;">Select All</span>
<div style="left:613.00px;top:413.00px;width:48.00px;height:14.00px;background:linear-gradient(180deg,#dce8f9 0%,#cbddf5 46%,#abc8ee 54%,#a4c3ec 100%);border:1px solid #86a9dc;box-sizing:border-box;border-radius:2.5px;box-shadow:inset 0 0 0 1px rgba(255,255,255,0.25)"></div>
<span class="t" style="left:629.00px;top:415px;font-size:8.0px;line-height:12px;color:#1e3c7b;letter-spacing:-0.188px;">Help</span>
<div style="left:666.00px;top:413.00px;width:48.00px;height:14.00px;background:linear-gradient(180deg,#dce8f9 0%,#cbddf5 46%,#abc8ee 54%,#a4c3ec 100%);border:1px solid #86a9dc;box-sizing:border-box;border-radius:2.5px;box-shadow:inset 0 0 0 1px rgba(255,255,255,0.25)"></div>
<span class="t" style="left:681.00px;top:415px;font-size:8.0px;line-height:12px;color:#1e3c7b;letter-spacing:-0.491px;">Close</span>
<div style="left:0.00px;top:556.00px;width:1021.00px;height:2.00px;background:#c3d8f3"></div>
<div style="left:0.00px;top:558.00px;width:1021.00px;height:18.00px;background:#d4d0c8;border-top:1px solid #eeece6;box-sizing:border-box"></div>
<div style="left:1.00px;top:561.00px;width:33.00px;height:13.00px;background:#d4d0c8;box-shadow:inset 1px 1px 0 #fff, inset -1px -1px 0 #505050, inset -2px -2px 0 #a8a49c"></div>
<svg style="left:4.00px;top:562.60px" width="9.00" height="10" viewBox="0 0 10 10" preserveAspectRatio="none"><path d="M0.6 2 Q2.6 0.8 4.6 2 L4 5 Q2.4 4 0.2 5Z" fill="#e03020"/><path d="M5.2 2.2 Q7.2 3.4 9.4 2.2 L8.8 5.2 Q6.8 6.2 4.6 5.2Z" fill="#30a030"/><path d="M0 5.8 Q2.2 4.8 3.8 5.8 L3.2 8.8 Q1.6 7.8 -0.4 8.8Z" fill="#2858d0"/><path d="M4.4 6 Q6.6 7.2 8.6 6 L8 9 Q6 10 3.8 9Z" fill="#e8c020"/></svg>
<span class="t" style="left:14.00px;top:562px;font-size:7.6px;line-height:11px;color:#000;font-weight:bold;letter-spacing:0.138px;">Start</span>
<div style="left:39.00px;top:561.00px;width:1.00px;height:13.00px;background:#808080"></div>
<div style="left:40.00px;top:561.00px;width:1.00px;height:13.00px;background:#fff"></div>
<svg style="left:45.30px;top:562.90px" width="8.40" height="9.4" viewBox="0 0 10 10" preserveAspectRatio="none"><rect x="0.4" y="0.6" width="9.2" height="8.8" rx="1.6" fill="#3a78d8" stroke="#1a3a88" stroke-width="0.5"/><circle cx="5" cy="5" r="2.8" fill="#d8e8f8"/><path d="M3.4 5H6.6M5 3.4V6.6" stroke="#3a78d8" stroke-width="0.8"/></svg>
<svg style="left:61.00px;top:562.40px" width="10.00" height="10" viewBox="0 0 10 10" preserveAspectRatio="none"><circle cx="5" cy="5.2" r="3.4" fill="none" stroke="#2a78e0" stroke-width="1.8"/><path d="M2 5.4H8.2" stroke="#2a78e0" stroke-width="1.2"/><path d="M0.6 8 Q3 1 9.6 1.4" stroke="#e8b020" stroke-width="0.9" fill="none"/></svg>
<svg style="left:76.00px;top:562.90px" width="8.40" height="9.4" viewBox="0 0 10 10" preserveAspectRatio="none"><circle cx="5" cy="5" r="4.4" fill="#f8c878" stroke="#d88820" stroke-width="0.8"/><path d="M2.6 5.2 Q5 8 7.4 5.2" stroke="#fff" stroke-width="1" fill="none"/><circle cx="5" cy="3.4" r="1" fill="#fff"/></svg>
<div style="left:91.00px;top:561.00px;width:1.00px;height:13.00px;background:#808080"></div>
<div style="left:92.00px;top:561.00px;width:1.00px;height:13.00px;background:#fff"></div>
<div style="left:95.00px;top:561.00px;width:103.00px;height:13.00px;background:#d4d0c8;box-shadow:inset 1px 1px 0 #fff, inset -1px -1px 0 #505050, inset -2px -2px 0 #a8a49c"></div>
<svg style="left:98.60px;top:562.90px" width="9.00" height="9.4" viewBox="0 0 10 10" preserveAspectRatio="none"><circle cx="5" cy="5" r="4.5" fill="#1a3a78" stroke="#0a1a48" stroke-width="0.4"/><path d="M5 0.8 A4.2 4.2 0 0 1 8.6 7.2 L5 5Z" fill="#a8c8e8"/></svg>
<span class="t" style="left:111.00px;top:562px;font-size:7.0px;line-height:11px;color:#000;letter-spacing:-0.287px;">Deltek Vision &amp; VPM</span>
<div style="left:200.00px;top:561.00px;width:102.00px;height:13.00px;background:#d4d0c8;box-shadow:inset 1px 1px 0 #fff, inset -1px -1px 0 #505050, inset -2px -2px 0 #a8a49c"></div>
<svg style="left:203.40px;top:562.40px" width="10.00" height="10" viewBox="0 0 10 10" preserveAspectRatio="none"><circle cx="5" cy="5.2" r="3.4" fill="none" stroke="#2a78e0" stroke-width="1.8"/><path d="M2 5.4H8.2" stroke="#2a78e0" stroke-width="1.2"/><path d="M0.6 8 Q3 1 9.6 1.4" stroke="#e8b020" stroke-width="0.9" fill="none"/></svg>
<span class="t" style="left:215.00px;top:562px;font-size:7.0px;line-height:11px;color:#000;letter-spacing:-0.051px;">Deltek Vision Version 6.2 ...</span>
<div style="left:304.00px;top:560.00px;width:101.00px;height:15.00px;background:#eceae4;box-shadow:inset 1px 1px 0 #505050, inset -1px -1px 0 #fff, inset 2px 2px 0 #a8a49c"></div>
<svg style="left:307px;top:563px" width="10" height="10" viewBox="0 0 10 10" preserveAspectRatio="none"><rect x="0" y="0" width="10" height="10" fill="#f2fafd" stroke="#86d2ea" stroke-width="1.6"/><path d="M5 7.6 L2 2 M5 7.6 L4 1.4 M5 7.6 L6 1.4 M5 7.6 L8 2 M5 7.6 L1.2 4.6 M5 7.6 L8.8 4.6" stroke="#3a8ec8" stroke-width="0.7" fill="none"/><path d="M1.6 7 Q5 9.6 8.4 7" stroke="#6ab8e0" stroke-width="0.7" fill="none"/></svg>
<span class="t" style="left:319.80px;top:563px;font-size:7.5px;line-height:11px;color:#000;font-weight:bold;letter-spacing:-0.077px;">Projects - Cohen &amp; As...</span>
<div style="left:945.00px;top:560.00px;width:74.00px;height:15.00px;background:#d4d0c8;box-shadow:inset 1px 1px 0 #9a968c, inset -1px -1px 0 #fff"></div>
<svg style="left:947px;top:562px" width="10" height="11" viewBox="0 0 10 10" preserveAspectRatio="none"><rect x="0" y="0" width="10" height="10" fill="#f2fafd" stroke="#86d2ea" stroke-width="1.6"/><path d="M5 7.6 L2 2 M5 7.6 L4 1.4 M5 7.6 L6 1.4 M5 7.6 L8 2 M5 7.6 L1.2 4.6 M5 7.6 L8.8 4.6" stroke="#3a8ec8" stroke-width="0.7" fill="none"/><path d="M1.6 7 Q5 9.6 8.4 7" stroke="#6ab8e0" stroke-width="0.7" fill="none"/></svg>
<svg style="left:958.00px;top:562.60px" width="9.60" height="9.6" viewBox="0 0 10 10" preserveAspectRatio="none"><circle cx="5" cy="5" r="4.8" fill="#1a1ae0"/><path d="M1.4 6 L4 4.6 L5.6 5.6 L8.6 3.8" stroke="#fff" stroke-width="1.2" fill="none"/></svg>
<svg style="left:968.60px;top:562.20px" width="10.00" height="9.6" viewBox="0 0 10 10" preserveAspectRatio="none"><rect x="0.4" y="0.6" width="9.2" height="8.4" rx="0.8" fill="#6e6e6e" stroke="#4a4a4a" stroke-width="0.5"/><text x="5" y="7" font-size="6.4" font-weight="bold" text-anchor="middle" fill="#fff" font-family="Liberation Sans, sans-serif">vm</text></svg>
<span class="t" style="left:985.00px;top:562px;font-size:7.0px;line-height:11px;color:#000;">11:15 AM</span>
</div></body></html>
